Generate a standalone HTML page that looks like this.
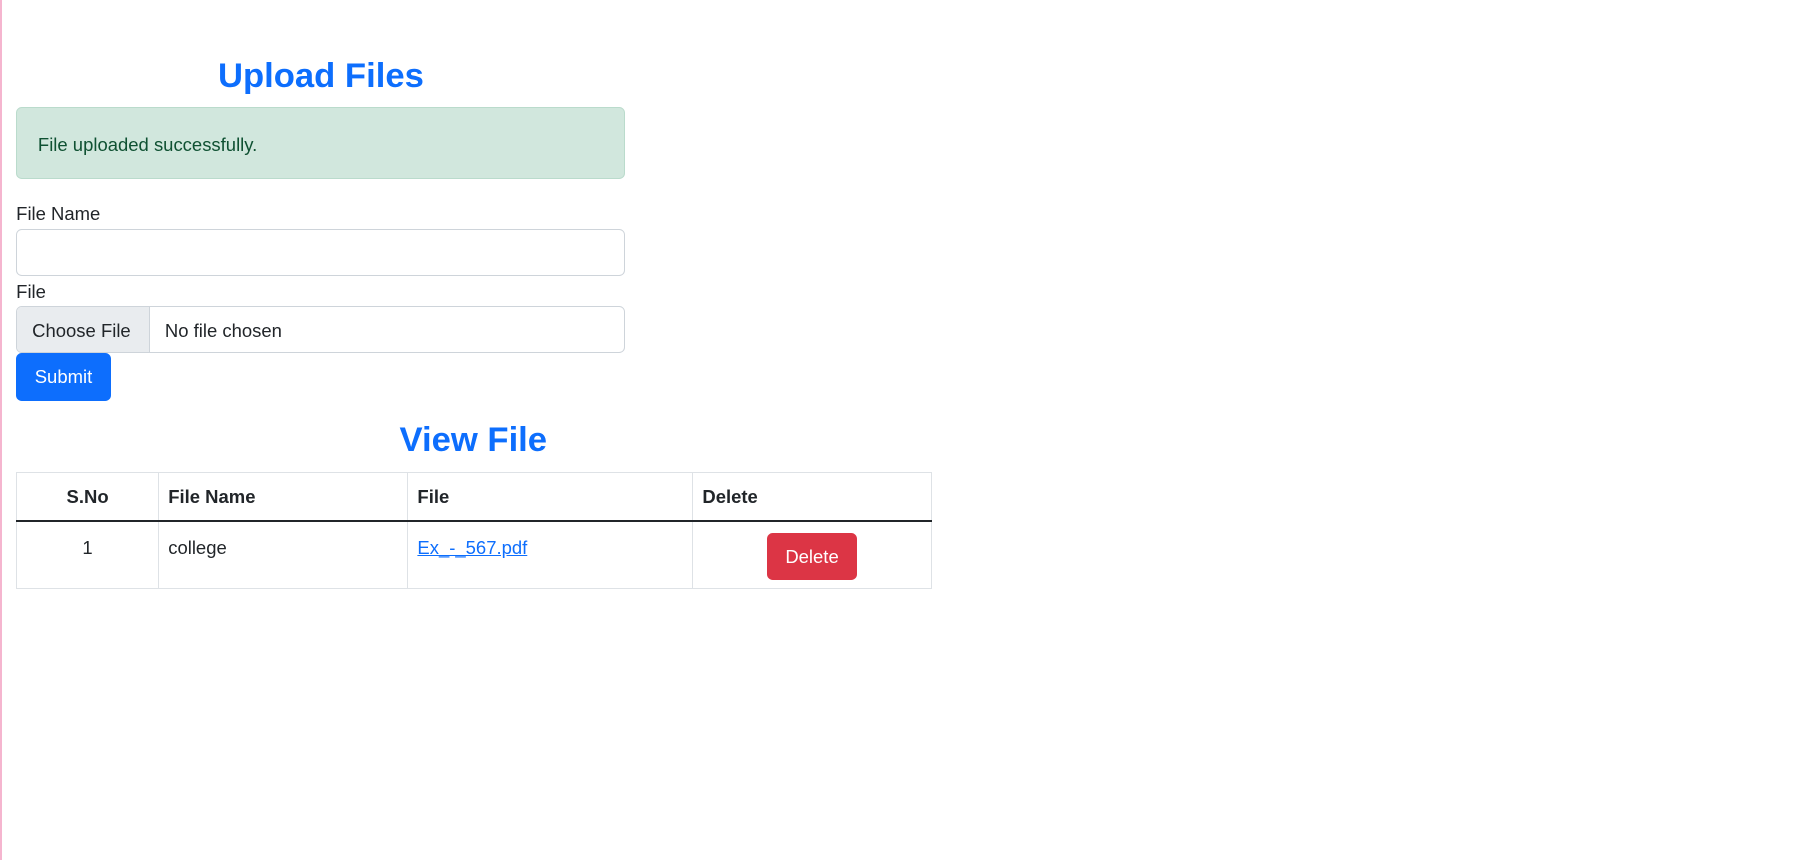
<!DOCTYPE html>
<html><head><style>
html,body{margin:0;padding:0;background:#fff;}
body{width:1810px;height:860px;overflow:hidden;position:relative;font-family:"Liberation Sans",sans-serif;color:#212529;}
.pink{position:absolute;left:0;top:0;width:2px;height:860px;background:#f5b5cf;}
.w{zoom:1.1544;position:absolute;left:0;top:0;width:1568px;height:745px;}
.a{position:absolute;}
h2{margin:0;font-size:30px;font-weight:bold;color:#0d6efd;text-align:center;position:absolute;}
.alert{left:14px;top:93px;width:526px;height:60px;background:#d1e7dd;border:1px solid #badbcc;border-radius:5px;color:#0f5132;font-size:16px;box-sizing:content-box;}
.alert span{position:absolute;left:18px;top:22px;}
.lbl{font-size:16px;left:14px;}
.inp{left:14px;width:526px;height:39px;border:1px solid #ced4da;border-radius:5px;background:#fff;font-size:16px;overflow:hidden;}
.btn{color:#fff;font-size:16px;border-radius:5px;text-align:center;}
table{position:absolute;left:14px;top:409px;width:793px;border-collapse:collapse;font-size:16px;}
td,th{border:1px solid #dee2e6;padding:0 8px;vertical-align:top;text-align:left;}
th{height:41px;vertical-align:middle;border-bottom:2px solid #212529;}
</style></head><body>
<div class="pink"></div>
<div class="w">
<h2 style="left:14px;width:528px;top:49px;">Upload Files</h2>
<div class="a alert"><span>File uploaded successfully.</span></div>
<div class="a lbl" style="top:176px;">File Name</div>
<div class="a inp" style="top:198px;"></div>
<div class="a lbl" style="top:243px;">File</div>
<div class="a inp" style="top:265px;"><div class="a" style="left:0;top:0;width:114px;height:39px;background:#e9ecef;border-right:1px solid #ced4da;"></div><span class="a" style="left:13px;top:11px;">Choose File</span><span class="a" style="left:128px;top:11px;">No file chosen</span></div>
<div class="a btn" style="left:14px;top:306px;width:82px;height:41px;background:#0d6efd;line-height:41px;">Submit</div>
<h2 style="left:14px;width:792px;top:365px;">View File</h2>
<table>
<tr><th style="width:106px;text-align:center">S.No</th><th style="width:199px">File Name</th><th style="width:230px">File</th><th>Delete</th></tr>
<tr style="height:58px"><td style="text-align:center;padding-top:13px">1</td><td style="padding-top:13px">college</td><td style="padding-top:13px"><a style="color:#0d6efd;text-decoration:underline">Ex_-_567.pdf</a></td><td><div class="btn" style="margin:9px 0 0 56px;width:78px;height:41px;line-height:41px;background:#dc3545;">Delete</div></td></tr>
</table>
</div>
</body></html>
